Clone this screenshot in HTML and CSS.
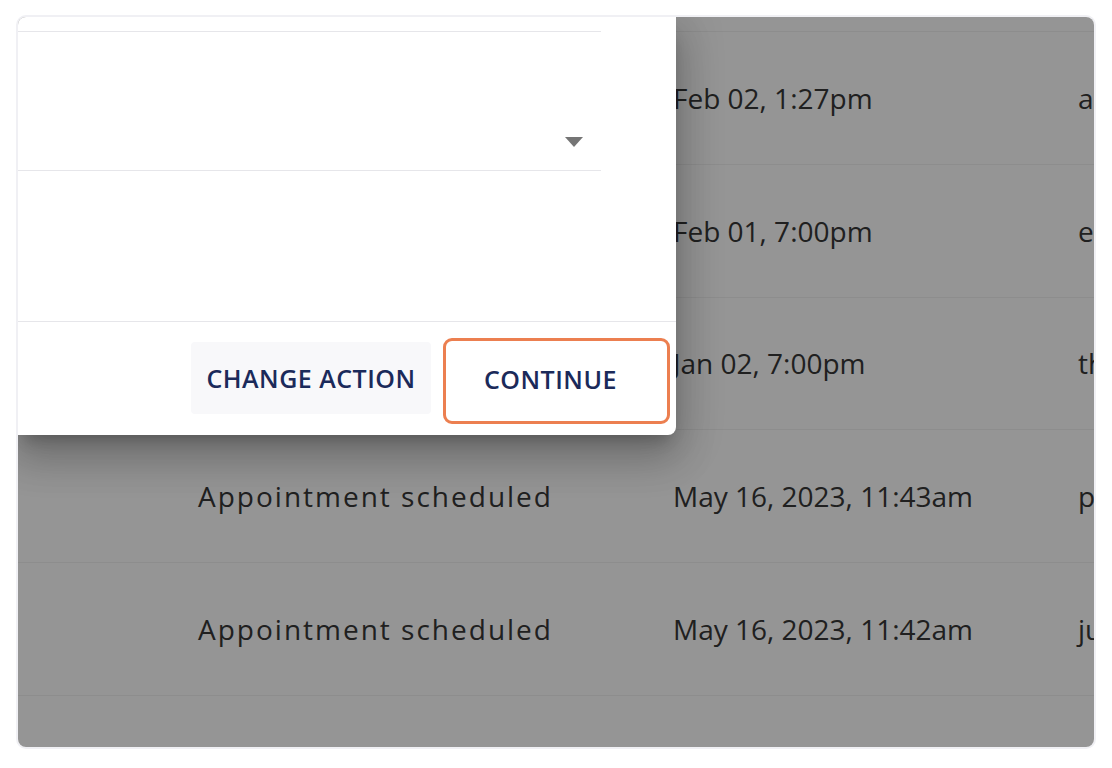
FILE: index.html
```html
<!DOCTYPE html>
<html lang="en">
<head>
<meta charset="utf-8">
<title>Change action dialog</title>
<link rel="stylesheet" href="styles.css">
</head>
<body>
<div class="frame">
  <div class="table">
    <div class="table-top"></div>
    <div class="row"><span class="cell desc"></span><span class="cell date">Feb 02, 1:27pm</span><span class="cell who">alex@example.com</span></div>
    <div class="row"><span class="cell desc"></span><span class="cell date">Feb 01, 7:00pm</span><span class="cell who">emma@example.com</span></div>
    <div class="row"><span class="cell desc"></span><span class="cell date">Jan 02, 7:00pm</span><span class="cell who">thomas@example.com</span></div>
    <div class="row"><span class="cell desc">Appointment scheduled</span><span class="cell date">May 16, 2023, 11:43am</span><span class="cell who">paul@example.com</span></div>
    <div class="row"><span class="cell desc">Appointment scheduled</span><span class="cell date">May 16, 2023, 11:42am</span><span class="cell who">julia@example.com</span></div>
  </div>

  <div class="dialog">
    <div class="dialog-body">
      <div class="select">
        <svg class="caret" width="18" height="10" viewBox="0 0 18 10" aria-hidden="true"><path d="M0 0 H18 L9 10 Z" fill="#757575"/></svg>
      </div>
    </div>
    <div class="dialog-space"></div>
    <div class="dialog-footer">
      <button class="btn btn-secondary">CHANGE ACTION</button>
      <div class="ring"><button class="btn btn-primary">CONTINUE</button></div>
    </div>
  </div>
</div>
</body>
</html>
```

FILE: styles.css
```css
html, body {
  margin: 0;
  padding: 0;
  background: #ffffff;
}

.frame {
  position: relative;
  margin: 15px 0 0 16px;
  width: 1076px;
  height: 730px;
  border: 2px solid #f0f0f4;
  border-radius: 10px;
  overflow: hidden;
  background: #959595;
}

.table {
  height: 100%;
  background: #959595;
}

.table-top {
  height: 14px;
  border-bottom: 1px solid #8d8d8d;
}

.row {
  height: 131.8px;
  border-bottom: 1px solid #8d8d8d;
  display: flex;
  align-items: center;
  padding-left: 180px;
  white-space: nowrap;
  font-family: "Open Sans", "Liberation Sans", sans-serif;
  font-size: 28px;
  color: #202020;
}

.cell {
  display: block;
  flex: none;
}

.desc {
  width: 475px;
  letter-spacing: 2px;
}

.date {
  width: 405px;
}

.who {
  width: 200px;
}

.dialog {
  position: absolute;
  left: 0;
  top: 0;
  width: 658px;
  height: 418px;
  background: #ffffff;
  border-radius: 0 0 8px 0;
  box-shadow: 0 11px 15px -7px rgba(0,0,0,0.22), 0 24px 38px 3px rgba(0,0,0,0.16), 0 9px 46px 8px rgba(0,0,0,0.14);
  display: flex;
  flex-direction: column;
}

.dialog-body {
  padding: 14px 75px 0 0;
}

.select {
  height: 115px;
  border-top: 1px solid #e6e6ea;
  border-bottom: 1px solid #e6e6ea;
  display: flex;
  justify-content: flex-end;
  align-items: flex-end;
  padding: 0 18px 23px 0;
  box-sizing: content-box;
}

.caret {
  display: block;
}

.dialog-space {
  height: 150px;
}

.dialog-footer {
  height: 112px;
  border-top: 1px solid #e6e6ea;
  display: flex;
  justify-content: flex-end;
  align-items: center;
  gap: 12px;
  padding-right: 6px;
}

.btn {
  height: 72px;
  padding: 0;
  border: 0;
  border-radius: 4px;
  font-family: "Open Sans", "Liberation Sans", sans-serif;
  font-weight: 600;
  font-size: 25px;
  letter-spacing: 0.5px;
  color: #1b2a5a;
  cursor: pointer;
}

.btn-secondary {
  width: 240px;
  background: #f8f8fa;
}

.ring {
  margin-top: 6px;
  border: 3px solid #ec7f50;
  border-radius: 9px;
  padding: 4px;
}

.btn-primary {
  display: block;
  width: 213px;
  padding: 0 12px 4px 0;
  background: #ffffff;
}
```
